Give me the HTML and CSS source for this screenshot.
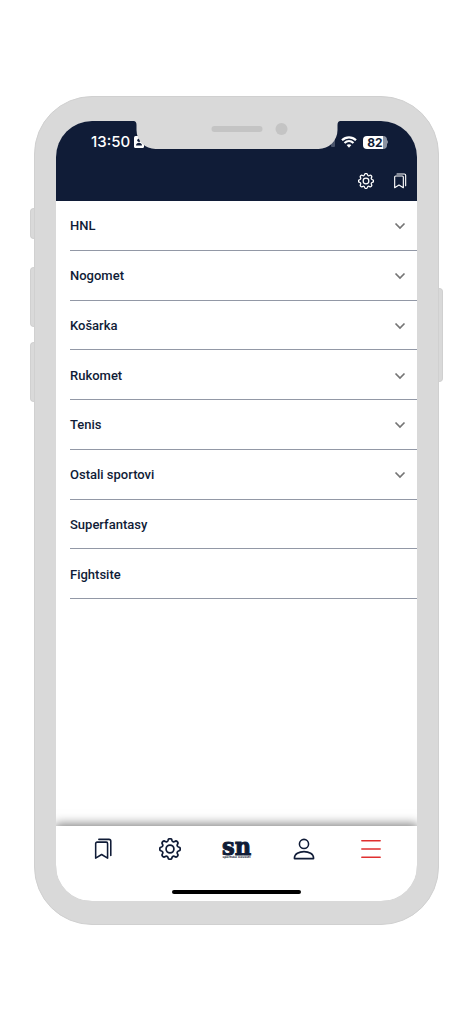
FILE: index.html
```html
<!DOCTYPE html>
<html lang="hr">
<head>
<meta charset="utf-8">
<meta name="viewport" content="width=device-width, initial-scale=1">
<title>Sportske novosti</title>
<link rel="stylesheet" href="styles.css">
</head>
<body>
<svg class="symbols" aria-hidden="true">
  <symbol id="gear" viewBox="1.300 1.300 21.400 21.400">
    <path d="M20.38 10.07A1.95 1.95 0 0 1 20.38 13.93A1.7 1.7 0 0 0 19.29 16.56A1.95 1.95 0 0 1 16.56 19.29A1.7 1.7 0 0 0 13.93 20.38A1.95 1.95 0 0 1 10.07 20.38A1.7 1.7 0 0 0 7.44 19.29A1.95 1.95 0 0 1 4.71 16.56A1.7 1.7 0 0 0 3.62 13.93A1.95 1.95 0 0 1 3.62 10.07A1.7 1.7 0 0 0 4.71 7.44A1.95 1.95 0 0 1 7.44 4.71A1.7 1.7 0 0 0 10.07 3.62A1.95 1.95 0 0 1 13.93 3.62A1.7 1.7 0 0 0 16.56 4.71A1.95 1.95 0 0 1 19.29 7.44A1.7 1.7 0 0 0 20.38 10.07Z"/>
    <circle cx="12" cy="12" r="3.8"/>
  </symbol>
  <symbol id="bookmarks" viewBox="0 0 24 24">
    <path d="M4 22V6A1.500 1.500 0 0 1 5.500 4.500H15.500A1.500 1.500 0 0 1 17 6V22L10.500 18Z"/>
    <path d="M7.500 1.500H18.500A2 2 0 0 1 20.500 3.500V19"/>
  </symbol>
  <symbol id="chevron" viewBox="0 0 12 8">
    <path d="M1.500 1.500L6 6L10.500 1.500"/>
  </symbol>
</svg>

<div class="phone">
  <main class="screen">
    <header class="top">
      <div class="status">
        <span class="time">13:50</span>
        <svg class="contact" viewBox="0 0 10 12"><rect width="10" height="12" rx="1.500" fill="#fff"/><circle cx="5" cy="4.200" r="1.700" fill="#101c37"/><path d="M2 9.500C2 5.800 8 5.800 8 9.500Z" fill="#101c37"/></svg>
        <svg class="signal" viewBox="0 0 4 10"><rect width="4" height="10" rx="1" fill="#4a546b"/></svg>
        <svg class="wifi" viewBox="0 0 16 12"><path d="M1 4.200C5 .3 11 .3 15 4.200M3.500 7C6.200 4.500 9.800 4.500 12.500 7" fill="none" stroke="#fff" stroke-width="2.200"/><path d="M5.600 9.100C7 7.900 9 7.900 10.400 9.100L8 11.700Z" fill="#fff"/></svg>
        <span class="battery">82</span>
        <svg class="cap" viewBox="0 0 2 4"><path d="M0 0Q2 2 0 4Z" fill="#8c93a2"/></svg>
      </div>
      <div class="actions">
        <button type="button" aria-label="Postavke"><svg class="icon"><use href="#gear"/></svg></button>
        <button type="button" aria-label="Spremljeno"><svg class="icon"><use href="#bookmarks"/></svg></button>
      </div>
      <svg class="notch" viewBox="0 0 207 28" aria-hidden="true">
        <path d="M0 0H207Q204 0 204 4V9A19 19 0 0 1 185 28H22A19 19 0 0 1 3 9V4Q3 0 0 0Z" fill="#d9d9d9"/>
        <rect x="78" y="5" width="51" height="6" rx="3" fill="#c4c4c4"/>
        <circle cx="148" cy="8" r="6" fill="#c4c4c4"/>
      </svg>
    </header>

    <ul class="list">
      <li><button type="button">HNL<svg class="chevron"><use href="#chevron"/></svg></button></li>
      <li><button type="button">Nogomet<svg class="chevron"><use href="#chevron"/></svg></button></li>
      <li><button type="button">Košarka<svg class="chevron"><use href="#chevron"/></svg></button></li>
      <li><button type="button">Rukomet<svg class="chevron"><use href="#chevron"/></svg></button></li>
      <li><button type="button">Tenis<svg class="chevron"><use href="#chevron"/></svg></button></li>
      <li><button type="button">Ostali sportovi<svg class="chevron"><use href="#chevron"/></svg></button></li>
      <li><a href="#superfantasy">Superfantasy</a></li>
      <li><a href="#fightsite">Fightsite</a></li>
    </ul>

    <footer class="bottom">
      <nav class="tabs">
        <a href="#spremljeno" aria-label="Spremljeno"><svg class="icon"><use href="#bookmarks"/></svg></a>
        <a href="#postavke" aria-label="Postavke"><svg class="icon"><use href="#gear"/></svg></a>
        <a class="logo" href="#naslovna"><span class="mark">sn</span><span class="name">sportske novosti</span></a>
        <a href="#profil" aria-label="Profil"><svg class="icon" viewBox="0 0 24 24"><circle cx="12" cy="6.500" r="5"/><path d="M1.500 22C1.500 12.500 22.500 12.500 22.500 22Q22.500 22.500 22 22.500H2Q1.500 22.500 1.500 22Z"/></svg></a>
        <a class="active" href="#izbornik" aria-label="Izbornik"><svg class="icon" viewBox="0 0 24 24"><path d="M2 3H22M2 12H22M2 21H22"/></svg></a>
      </nav>
      <div class="home"></div>
    </footer>
  </main>
  <span class="key silent"></span>
  <span class="key volume-up"></span>
  <span class="key volume-down"></span>
  <span class="key power"></span>
</div>
</body>
</html>
```

FILE: styles.css
```css
* {
  box-sizing: border-box;
}

body {
  margin: 0;
  padding: 96px 34px;
  background: #fff;
  color: #101c37;
  font-family: Roboto, "Noto Sans", sans-serif;
}

button {
  padding: 0;
  border: 0;
  background: none;
  color: inherit;
  font: inherit;
}

a {
  color: inherit;
  text-decoration: none;
}

svg {
  display: block;
}

.symbols {
  position: absolute;
  width: 0;
  height: 0;
}

.icon {
  width: 22px;
  height: 22px;
  fill: none;
  stroke: currentColor;
  stroke-width: 1.7;
  stroke-linejoin: round;
  stroke-linecap: round;
}

.phone {
  position: relative;
  padding: 24px 21px 23px;
  border: 1px solid #d0d0d0;
  border-radius: 58px;
  background: #d9d9d9;
}

.screen {
  display: flex;
  flex-direction: column;
  min-height: 780px;
  overflow: hidden;
  border-radius: 36px;
  background: #fff;
}

.top {
  position: relative;
  background: #101c37;
  color: #fff;
}

.status {
  display: flex;
  align-items: center;
  height: 42px;
  padding: 0 28px 0 35px;
}

.time {
  font: 500 15px/20px Inter, sans-serif;
}

.contact {
  width: 10px;
  height: 12px;
  margin-left: 4px;
}

.signal {
  width: 4px;
  height: 10px;
  margin: 0 6px 0 auto;
}

.wifi {
  width: 16px;
  height: 12px;
  margin-right: 6px;
}

.battery {
  width: 24px;
  border-radius: 4px;
  background: linear-gradient(90deg, #fff 82%, #8c93a2 82%);
  color: #101c37;
  font: 700 12px/13px Inter, sans-serif;
  text-align: center;
}

.cap {
  width: 2px;
  height: 4px;
}

.notch {
  position: absolute;
  top: 0;
  left: 50%;
  width: 207px;
  height: 28px;
  transform: translateX(-50%);
}

.actions {
  display: flex;
  align-items: flex-start;
  justify-content: flex-end;
  gap: 18px;
  height: 38px;
  padding: 10px 9px 0 0;
}

.actions .icon {
  width: 16px;
  height: 16px;
}

.list {
  display: grid;
  grid-auto-rows: 1fr;
  height: 398px;
  margin: 0;
  padding: 0 0 0 14px;
  list-style: none;
  font-size: 13px;
  font-weight: 500;
  line-height: 20px;
}

.list li {
  display: flex;
  border-bottom: 1px solid #9298a6;
}

.list button,
.list a {
  display: flex;
  flex: 1;
  align-items: center;
  justify-content: space-between;
  padding: 2px 11px 0 0;
  text-align: left;
}

.chevron {
  width: 12px;
  height: 8px;
  fill: none;
  stroke: #757575;
  stroke-width: 1.7;
}

.bottom {
  margin-top: auto;
  padding-bottom: 7px;
  background: #fff;
  box-shadow: 0 -1px 10px 1px rgb(0 0 0 / 50%);
}

.tabs {
  display: grid;
  grid-template-columns: repeat(5, 1fr);
  height: 64px;
  padding: 12px 13px 0;
}

.tabs a {
  display: flex;
  flex-direction: column;
  align-items: center;
}

.tabs .active {
  color: #e03030;
}

.logo .mark {
  font: 700 25px/17px "DejaVu Serif Condensed", "DejaVu Serif", serif;
  -webkit-text-stroke: 1px currentColor;
}

.logo .name {
  font: 700 3px/4px "DejaVu Sans", sans-serif;
  white-space: nowrap;
}

.home {
  width: 36%;
  height: 4px;
  margin: 0 auto;
  border-radius: 2px;
  background: #000;
}

.key {
  position: absolute;
  left: -5px;
  width: 4px;
  border: 1px solid #d0d0d0;
  border-right: 0;
  border-radius: 4px 0 0 4px;
  background: #d9d9d9;
}

.silent {
  top: 111px;
  height: 31px;
}

.volume-up {
  top: 170px;
  height: 60px;
}

.volume-down {
  top: 245px;
  height: 60px;
}

.power {
  top: 191px;
  right: -5px;
  left: auto;
  height: 94px;
  border: 1px solid #d0d0d0;
  border-left: 0;
  border-radius: 0 4px 4px 0;
}
```
